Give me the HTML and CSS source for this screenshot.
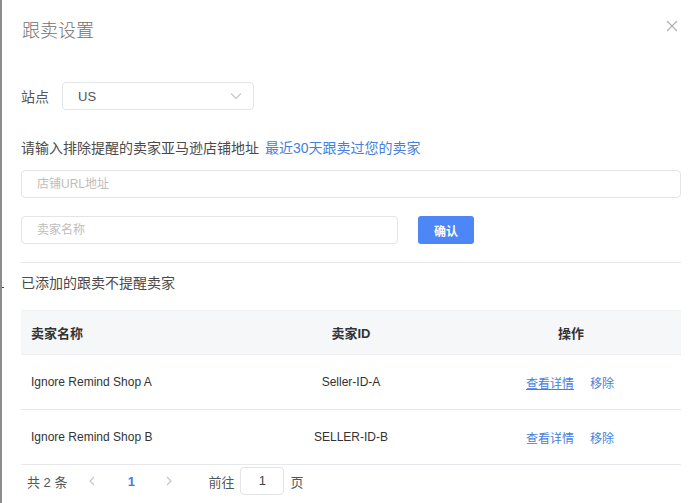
FILE: index.html
```html
<!DOCTYPE html>
<html lang="zh">
<head>
<meta charset="utf-8">
<title>跟卖设置</title>
<link rel="stylesheet" href="styles.css">
</head>
<body>
<div class="dialog">
  <div class="header">
    <span class="title">跟卖设置</span>
    <svg class="close" width="12" height="12" viewBox="0 0 12 12"><path d="M1 1 L11 11 M11 1 L1 11" stroke="#b0b0b0" stroke-width="1.2" fill="none"/></svg>
  </div>

  <div class="site-row">
    <span class="label">站点</span>
    <div class="select">
      <span>US</span>
      <svg width="12" height="8" viewBox="0 0 12 8"><path d="M1 1.5 L6 6.5 L11 1.5" stroke="#c0c4cc" stroke-width="1.1" fill="none"/></svg>
    </div>
  </div>

  <div class="hint">请输入排除提醒的卖家亚马逊店铺地址<a class="link">最近30天跟卖过您的卖家</a></div>

  <div class="input wide">店铺URL地址</div>

  <div class="name-row">
    <div class="input name">卖家名称</div>
    <button class="btn">确认</button>
  </div>

  <div class="divider"></div>

  <div class="section-title">已添加的跟卖不提醒卖家</div>

  <div class="table">
    <div class="row head">
      <div class="cell left">卖家名称</div>
      <div class="cell center">卖家ID</div>
      <div class="cell center">操作</div>
    </div>
    <div class="row">
      <div class="cell left">Ignore Remind Shop A</div>
      <div class="cell center">Seller-ID-A</div>
      <div class="cell center actions"><a class="act underline">查看详情</a><a class="act">移除</a></div>
    </div>
    <div class="row">
      <div class="cell left">Ignore Remind Shop B</div>
      <div class="cell center">SELLER-ID-B</div>
      <div class="cell center actions"><a class="act">查看详情</a><a class="act">移除</a></div>
    </div>
  </div>

  <div class="pager">
    <span class="total">共 2 条</span>
    <span class="nav prev">
      <svg width="8" height="10" viewBox="0 0 8 10"><path d="M6 1 L2 5 L6 9" stroke="#c0c4cc" stroke-width="1.1" fill="none"/></svg>
    </span>
    <span class="page">1</span>
    <span class="nav next">
      <svg width="8" height="10" viewBox="0 0 8 10"><path d="M2 1 L6 5 L2 9" stroke="#c0c4cc" stroke-width="1.1" fill="none"/></svg>
    </span>
    <span class="goto">前往</span>
    <span class="page-input">1</span>
    <span class="goto-end">页</span>
  </div>
</div>
</body>
</html>
```

FILE: styles.css
```css
* { box-sizing: border-box; }

html, body {
  margin: 0;
  padding: 0;
  background: #fff;
}

body {
  width: 696px;
  height: 503px;
  overflow: hidden;
  border-left: 2px solid #8c8c8c;
  font-family: "Liberation Sans", "Noto Sans CJK SC", sans-serif;
  color: #444;
  position: relative;
}

body::after {
  content: "";
  position: absolute;
  left: -2px;
  top: 287px;
  width: 4px;
  height: 1px;
  background: #444;
}

.dialog {
  padding: 19px 15px 0 19px;
}

.header {
  display: flex;
  justify-content: space-between;
  align-items: flex-start;
  padding-left: 1px;
}

.title {
  font-size: 18px;
  line-height: 24px;
  color: #707070;
  font-weight: 300;
}

.close {
  margin-top: 1px;
  margin-right: 3px;
}

.site-row {
  display: flex;
  align-items: center;
  margin-top: 39px;
  height: 28px;
}

.label {
  font-size: 14px;
  color: #555;
  width: 41px;
}

.select {
  width: 192px;
  height: 28px;
  border: 1px solid #e2e4e8;
  border-radius: 4px;
  display: flex;
  align-items: center;
  justify-content: space-between;
  padding: 0 11px 0 15px;
  font-size: 13px;
  color: #555;
}

.hint {
  margin-top: 28px;
  font-size: 14px;
  line-height: 20px;
  color: #4a4a4a;
}

.link {
  color: #4680dc;
  margin-left: 6px;
}

.input {
  height: 28px;
  border: 1px solid #e2e4e8;
  border-radius: 4px;
  padding-left: 15px;
  font-size: 12px;
  line-height: 26px;
  color: #bdbdbd;
}

.wide {
  margin-top: 12px;
  width: 660px;
}

.name-row {
  display: flex;
  gap: 20px;
  margin-top: 18px;
}

.name {
  width: 377px;
}

.btn {
  width: 56px;
  height: 28px;
  border: none;
  border-radius: 3px;
  background: #4d87f7;
  color: #fff;
  font-family: "Liberation Sans", "Noto Sans CJK SC", sans-serif;
  font-size: 12px;
  font-weight: bold;
  padding: 0;
}

.divider {
  margin-top: 18px;
  height: 1px;
  width: 660px;
  background: #e6e8ec;
}

.section-title {
  margin-top: 10px;
  font-size: 14px;
  line-height: 20px;
  color: #4a4a4a;
}

.table {
  margin-top: 17px;
  width: 660px;
}

.row {
  display: grid;
  grid-template-columns: 1fr 1fr 1fr;
  height: 55px;
  border-bottom: 1px solid #e6e8ec;
  align-items: center;
  font-size: 12px;
  color: #333;
}

.row.head {
  height: 45px;
  background: #f6f7f9;
  border-top: 1px solid #eef0f3;
  border-bottom: 1px solid #eceef2;
  font-size: 13px;
  font-weight: bold;
  color: #333;
}

.cell.left {
  padding-left: 10px;
}

.cell.center {
  text-align: center;
}

.actions {
  display: flex;
  justify-content: center;
  gap: 16px;
  padding-right: 2px;
}

.act {
  color: #4680dc;
}

.underline {
  text-decoration: underline;
}

.pager {
  display: flex;
  align-items: center;
  height: 32px;
  font-size: 13px;
  color: #555;
}

.total {
  margin-left: 6px;
}

.nav {
  width: 30px;
  display: flex;
  justify-content: center;
}

.prev {
  margin-left: 10px;
}

.page {
  width: 30px;
  text-align: center;
  margin-left: 9px;
  margin-right: 8px;
  color: #3d7ee8;
  font-weight: bold;
}

.goto {
  margin-left: 24px;
}

.page-input {
  width: 44px;
  height: 28px;
  margin-left: 6px;
  border: 1px solid #e2e4e8;
  border-radius: 4px;
  text-align: center;
  line-height: 26px;
  color: #444;
}

.goto-end {
  margin-left: 6px;
}
```
